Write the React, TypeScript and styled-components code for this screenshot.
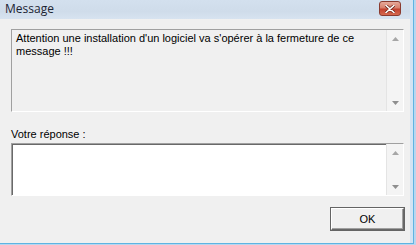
import React, { useState } from 'react';
import styled, { createGlobalStyle } from 'styled-components';

const GlobalStyle = createGlobalStyle`
  html, body {
    margin: 0;
    padding: 0;
    background: #f0f0f0;
  }
  * {
    box-sizing: border-box;
  }
`

const Frame = styled.div`
  width: 416px;
  height: 245px;
  display: flex;
  flex-direction: column;
  background: #b9d6ef;
  padding-right: 2px;
  padding-bottom: 1px;
  overflow: hidden;
`

const Window = styled.div`
  flex: 1;
  display: flex;
  flex-direction: column;
  border-right: 1px solid #5eb4e2;
  border-bottom: 1px solid #5eb4e2;
`

const TitleBar = styled.div`
  height: 19px;
  display: flex;
  align-items: center;
  justify-content: space-between;
  padding: 0 9px 0 5px;
  background: linear-gradient(to bottom, #d3e0ee 0%, #cfdcea 60%, #d7e3f0 100%);
  border-right: 3px solid #d3e3f3;
`

const Title = styled.span`
  font-family: "Open Sans", "Noto Sans", sans-serif;
  font-size: 12px;
  color: #1b2433;
  line-height: 19px;
  margin-top: -2px;
`

const CloseButton = styled.button`
  width: 22px;
  height: 15px;
  margin-top: -2px;
  padding: 0;
  border: 1px solid #8a3b2f;
  border-radius: 3px;
  background: linear-gradient(to bottom, #e5a99a 0%, #d8806d 45%, #c2412f 55%, #d56a4f 100%);
  display: flex;
  align-items: center;
  justify-content: center;
  cursor: pointer;
`

const Body = styled.div`
  flex: 1;
  display: flex;
  flex-direction: column;
  background: #f0f0f0;
  padding: 10px 6px 0 11px;
  border-right: 3px solid #d3e3f3;
`

const TextArea = styled.div<{ $editable?: boolean }>`
  display: flex;
  height: ${p => (p.$editable ? '53px' : '83px')};
  background: ${p => (p.$editable ? '#ffffff' : '#f0f0f0')};
  border-top: 1px solid ${p => (p.$editable ? '#a0a0a0' : '#a0a0a0')};
  border-left: 1px solid #a0a0a0;
  border-right: 1px solid #ffffff;
  border-bottom: 1px solid #ffffff;
  box-shadow: ${p => (p.$editable ? 'inset 1px 1px 0 #696969' : 'none')};
`

const Content = styled.div`
  flex: 1;
  padding: 2px 4px;
  font-family: "Liberation Sans", Arial, sans-serif;
  font-size: 11px;
  line-height: 13px;
  color: #000;
`

const Editor = styled.textarea`
  flex: 1;
  border: none;
  outline: none;
  resize: none;
  background: transparent;
  padding: 2px 4px;
  font-family: "Liberation Sans", Arial, sans-serif;
  font-size: 11px;
`

const ScrollBar = styled.div`
  width: 17px;
  display: flex;
  flex-direction: column;
  justify-content: space-between;
  border-left: 1px solid #e4e4e4;
  background: #f4f4f4;
`

const Arrow = styled.div`
  height: 17px;
  display: flex;
  align-items: center;
  justify-content: center;
`

const Label = styled.div`
  margin-top: 16px;
  height: 15px;
  font-family: "Liberation Sans", Arial, sans-serif;
  font-size: 11px;
  color: #000;
`

const ButtonRow = styled.div`
  display: flex;
  justify-content: flex-end;
  margin-top: 12px;
`

const OkButton = styled.button`
  width: 73px;
  height: 22px;
  padding: 0;
  background: #f0f0f0;
  border-top: 1px solid #ffffff;
  border-left: 1px solid #ffffff;
  border-right: 1px solid #696969;
  border-bottom: 1px solid #696969;
  box-shadow: inset -1px -1px 0 #a0a0a0, 0 0 0 1px #646464;
  font-family: "Liberation Sans", Arial, sans-serif;
  font-size: 11px;
  color: #000;
  cursor: pointer;
`

const Scroll = () => (
  <ScrollBar>
    <Arrow>
      <svg width="7" height="4" viewBox="0 0 7 4"><path d="M3.5 0 L7 4 L0 4 Z" fill="#a6a6a6" /></svg>
    </Arrow>
    <Arrow>
      <svg width="7" height="4" viewBox="0 0 7 4"><path d="M0 0 L7 0 L3.5 4 Z" fill="#8e8e8e" /></svg>
    </Arrow>
  </ScrollBar>
)

const App = (): JSX.Element => {
  const [answer, setAnswer] = useState<string>('')

  return (
    <Frame>
      <GlobalStyle />
      <Window>
        <TitleBar>
          <Title>Message</Title>
          <CloseButton aria-label="Fermer">
            <svg width="10" height="8" viewBox="0 0 10 8">
              <path d="M1 0.5 L9 7.5 M9 0.5 L1 7.5" stroke="#6b2418" strokeWidth="3" strokeLinecap="round" />
              <path d="M1 0.5 L9 7.5 M9 0.5 L1 7.5" stroke="#ffffff" strokeWidth="1.6" strokeLinecap="round" />
            </svg>
          </CloseButton>
        </TitleBar>
        <Body>
          <TextArea>
            <Content>
              Attention une installation d'un logiciel va s'opérer à la fermeture de ce message !!!
            </Content>
            <Scroll />
          </TextArea>
          <Label>Votre réponse :</Label>
          <TextArea $editable>
            <Editor value={answer} onChange={(e) => setAnswer(e.target.value)} />
            <Scroll />
          </TextArea>
          <ButtonRow>
            <OkButton>OK</OkButton>
          </ButtonRow>
        </Body>
      </Window>
    </Frame>
  )
}

export default App;
